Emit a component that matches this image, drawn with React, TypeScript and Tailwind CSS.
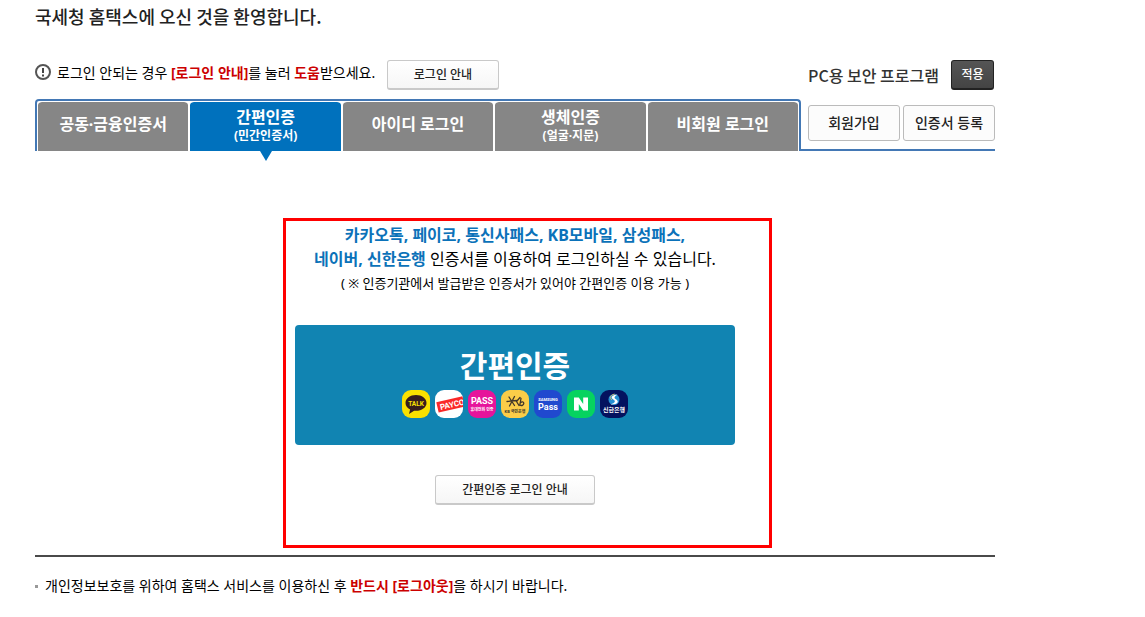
import React, { useState } from 'react';

type Tab = { id: string; label: string; sub?: string };

const TABS: Tab[] = [
  { id: 'cert', label: '공동·금융인증서' },
  { id: 'simple', label: '간편인증', sub: '(민간인증서)' },
  { id: 'id', label: '아이디 로그인' },
  { id: 'bio', label: '생체인증', sub: '(얼굴·지문)' },
  { id: 'guest', label: '비회원 로그인' },
];

const svgFont = { fontFamily: 'Roboto, "Noto Sans CJK KR", sans-serif' };

function AppIcon({ fill, children }: { fill: string; children: React.ReactNode }) {
  return (
    <svg className="h-7 w-7" viewBox="0 0 28 28" style={svgFont} aria-hidden="true">
      <rect width="28" height="28" rx="9" fill={fill} />
      {children}
    </svg>
  );
}

function ProviderIcons() {
  return (
    <span className="flex gap-[5px]">
      <AppIcon fill="#fae100">
        <path d="M14 5C8.200 5 3.500 8.400 3.500 13c0 2.800 1.800 5.100 4.600 6.500L7 24l5.100-3.300c.6.100 1.200.1 1.900.1 5.800 0 10.500-3.300 10.500-7.800S19.800 5 14 5z" fill="#371d1e" />
        <text x="14" y="15.500" textAnchor="middle" fontSize="6.500" fontWeight="700" fill="#fae100">TALK</text>
      </AppIcon>
      <svg className="h-7 w-7" viewBox="0 0 28 28" style={svgFont} aria-hidden="true">
        <defs>
          <clipPath id="payco-clip"><rect width="28" height="28" rx="9" /></clipPath>
        </defs>
        <g clipPath="url(#payco-clip)">
          <rect width="28" height="28" fill="#fff" />
          <g transform="rotate(-13 14 14)">
            <rect x="2" y="9.500" width="27" height="10.500" fill="#fa2828" />
            <text x="4.500" y="18" fontSize="8" fontWeight="700" fill="#fff">PAYCO</text>
          </g>
        </g>
      </svg>
      <AppIcon fill="#e6149b">
        <text x="14" y="14" textAnchor="middle" fontSize="9" fontWeight="700" fill="#fff">PASS</text>
        <text x="14" y="20.500" textAnchor="middle" fontSize="4" fontWeight="700" fill="#fff">휴대전화 인증</text>
      </AppIcon>
      <AppIcon fill="#fbcd48">
        <path d="M6 11.500l9.500-1M8 7l5.500 8.500M13.500 6.500L8.500 16M19 7.500l-3.500 4 2.500 4M20 8.500l-1.200 6.500c1.700 1 4 .3 4-1.700 0-1.700-2-2-3.200-.6" fill="none" stroke="#40362a" strokeWidth="1.300" strokeLinecap="round" strokeLinejoin="round" />
        <text x="14" y="23" textAnchor="middle" fontSize="4" fontWeight="700" fill="#40362a">KB 국민은행</text>
      </AppIcon>
      <AppIcon fill="#2049cf">
        <text x="14" y="11" textAnchor="middle" fontSize="4" fontWeight="700" fill="#fff">SAMSUNG</text>
        <text x="14" y="19.500" textAnchor="middle" fontSize="9" fontWeight="700" fill="#fff">Pass</text>
      </AppIcon>
      <AppIcon fill="#06d35f">
        <path d="M7 7.500h4.800l4.400 6.500V7.500H21v13h-4.800L11.800 14v6.500H7z" fill="#fff" />
      </AppIcon>
      <AppIcon fill="#04125f">
        <circle cx="14" cy="9.500" r="5.500" fill="#238fd2" />
        <path d="M17.500 4.500c-5 .2-7.500 3-4.500 4.800 3 1.700 2.500 3.700-2.500 5.200 6.500.4 9.500-2.500 5.500-5.200-2.500-1.600-1.500-2.800 1.500-4.800z" fill="#fff" />
        <path d="M14.500 4c-4.500 1.500-5.500 4-2.500 5.800" fill="none" stroke="#d7b56a" strokeWidth="1" />
        <text x="14" y="22" textAnchor="middle" fontSize="6" fontWeight="700" fill="#fff">신한은행</text>
      </AppIcon>
    </span>
  );
}

function GuideButton({ className, children }: { className: string; children: React.ReactNode }) {
  return (
    <button
      type="button"
      className={`h-[30px] rounded-[3px] border border-b-2 border-[#c9c9c9] bg-linear-to-b from-white to-[#f6f6f6] text-xs font-medium text-[#222] ${className}`}
    >
      {children}
    </button>
  );
}

export default function App() {
  const [active, setActive] = useState('simple');

  return (
    <main className="ml-[35px] max-w-[960px] bg-white font-['Noto_Sans','Noto_Sans_CJK_KR',sans-serif] text-sm text-black">
      <h1 className="pt-[3px] font-['Noto_Sans_CJK_KR',sans-serif] text-lg leading-[26px] font-medium text-[#222]">
        국세청 홈택스에 오신 것을 환영합니다.
      </h1>

      <div className="mt-[31px] flex items-center justify-between">
        <div className="flex items-center">
          <svg className="mr-[6px] mb-[6px] h-4 w-4" viewBox="0 0 16 16" aria-hidden="true">
            <circle cx="8" cy="8" r="7" fill="none" stroke="#555" strokeWidth="2" />
            <path d="M8 4v5M8 10.500v2" stroke="#444" strokeWidth="2" />
          </svg>
          <p className="mb-1 w-[330px] whitespace-nowrap">
            로그인 안되는 경우 <strong className="font-bold text-[#c00]">[로그인 안내]</strong>를 눌러{' '}
            <strong className="font-bold text-[#c00]">도움</strong>받으세요.
          </p>
          <GuideButton className="w-28">로그인 안내</GuideButton>
        </div>
        <div className="flex items-center gap-3 pr-px">
          <span className="font-['Noto_Sans_CJK_KR',sans-serif] text-base font-medium text-[#333]">PC용 보안 프로그램</span>
          <button
            type="button"
            className="h-[30px] w-[43px] rounded-[3px] border border-b-2 border-[#222] bg-linear-to-b from-[#555] to-[#444] text-xs font-medium text-white"
          >
            적용
          </button>
        </div>
      </div>

      <div className="mt-[9px] flex">
        <div role="tablist" className="flex h-[52px] flex-1 gap-[2px] rounded-t-[4px] border-x-2 border-t-2 border-[#4378b5] px-px">
          {TABS.map((tab) => {
            const selected = tab.id === active;
            return (
              <button
                key={tab.id}
                type="button"
                role="tab"
                aria-selected={selected}
                onClick={() => setActive(tab.id)}
                className={`relative flex-1 rounded-t-[4px] border-t border-white bg-clip-padding font-bold text-white ${tab.sub ? 'pb-[2px]' : 'pb-[6px]'} ${selected ? 'bg-[#0071bd]' : 'bg-[#868686]'}`}
              >
                <span className="block text-base leading-5">{tab.label}</span>
                {tab.sub && <span className="block text-xs leading-[18px]">{tab.sub}</span>}
                {selected && (
                  <svg className="absolute top-full left-1/2 h-[10px] w-3 -translate-x-1/2" viewBox="0 0 12 10" aria-hidden="true">
                    <path d="M0 0h12L6 10z" fill="#0071bd" />
                  </svg>
                )}
              </button>
            );
          })}
        </div>
        <div className="flex h-[52px] w-[194px] items-start justify-end gap-[3px] border-b-2 border-[#4378b5] pt-[6px]">
          <button type="button" className="h-9 w-[92px] rounded-[3px] border border-[#bbb] bg-[#fcfcfc] text-sm font-medium text-[#222]">
            회원가입
          </button>
          <button type="button" className="h-9 w-[92px] rounded-[3px] border border-[#bbb] bg-[#fcfcfc] text-sm font-medium text-[#222]">
            인증서 등록
          </button>
        </div>
      </div>

      <div className="mt-[67px] flex justify-center pl-[25px]">
        <section className="flex w-[489px] flex-col items-center border-3 border-[#f00] pt-[2px] pr-[34px] pb-10 pl-[9px]">
          <p className="text-center text-base leading-6 whitespace-nowrap">
            <strong className="font-bold text-[#0b72b9]">
              카카오톡, 페이코, 통신사패스, KB모바일, 삼성패스,
              <br />
              네이버, 신한은행
            </strong>{' '}
            인증서를 이용하여 로그인하실 수 있습니다.
          </p>
          <p className="text-center text-[13px] leading-6 whitespace-nowrap">
            ( ※ 인증기관에서 발급받은 인증서가 있어야 간편인증 이용 가능 )
          </p>
          <button
            type="button"
            className="mt-[30px] flex h-[120px] w-full flex-col items-center rounded-[4px] bg-[#1184b2] pt-[17px] text-white"
          >
            <span className="text-[30px] leading-[48px] font-bold">간편인증</span>
            <ProviderIcons />
          </button>
          <GuideButton className="mt-[30px] w-40">간편인증 로그인 안내</GuideButton>
        </section>
      </div>

      <footer className="mt-[7px] flex items-center gap-[7px] border-t-2 border-[#4a4a4a] pt-[19px]">
        <span className="h-[3px] w-[3px] bg-[#999]" />
        <p>
          개인정보보호를 위하여 홈택스 서비스를 이용하신 후{' '}
          <strong className="font-bold text-[#c00]">반드시 [로그아웃]</strong>을 하시기 바랍니다.
        </p>
      </footer>
    </main>
  );
}
